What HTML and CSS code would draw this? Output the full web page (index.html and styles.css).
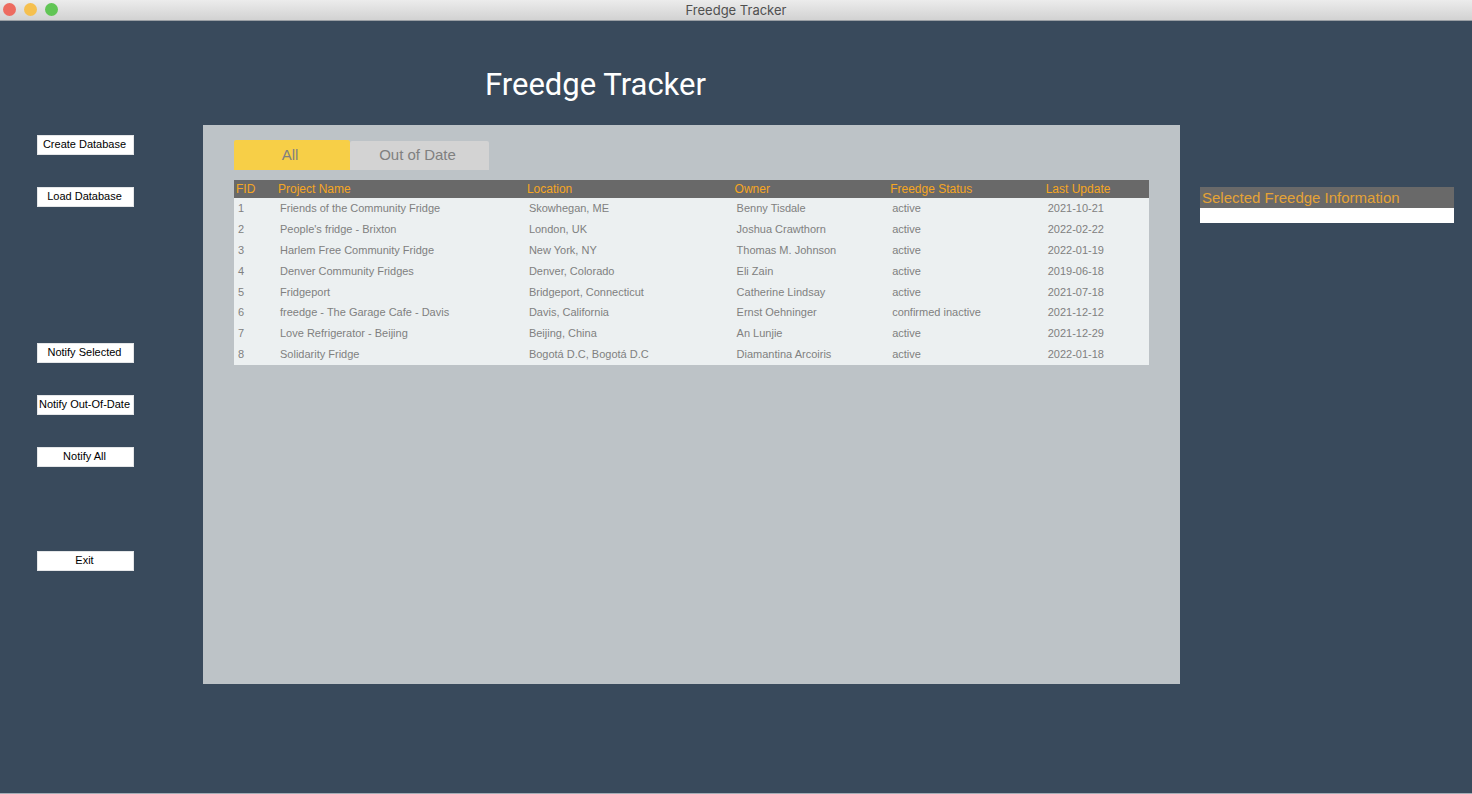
FILE: index.html
```html
<!DOCTYPE html>
<html lang="en">
<head>
<meta charset="utf-8">
<title>Freedge Tracker</title>
<link rel="stylesheet" href="styles.css">
</head>
<body>
<div class="window">
  <header class="titlebar">
    <div class="lights">
      <button class="light light-close" type="button" aria-label="Close"></button>
      <button class="light light-minimize" type="button" aria-label="Minimize"></button>
      <button class="light light-zoom" type="button" aria-label="Zoom"></button>
    </div>
    <span class="window-title">Freedge Tracker</span>
  </header>
  <div class="layout">
    <nav class="sidebar">
      <div class="group">
        <button class="action" type="button">Create Database</button>
        <button class="action" type="button">Load Database</button>
      </div>
      <div class="group group-notify">
        <button class="action" type="button">Notify Selected</button>
        <button class="action" type="button">Notify Out-Of-Date</button>
        <button class="action" type="button">Notify All</button>
      </div>
      <button class="action" type="button">Exit</button>
    </nav>
    <main class="main">
      <h1 class="heading">Freedge Tracker</h1>
      <section class="panel">
        <div class="tabs" role="tablist">
          <button class="tab tab-active" type="button" role="tab" aria-selected="true">All</button>
          <button class="tab" type="button" role="tab" aria-selected="false">Out of Date</button>
        </div>
        <table class="records">
          <colgroup>
            <col class="col-id"><col class="col-name"><col class="col-location"><col class="col-owner"><col class="col-status"><col class="col-update">
          </colgroup>
          <thead>
            <tr><th>FID</th><th>Project Name</th><th>Location</th><th>Owner</th><th>Freedge Status</th><th>Last Update</th></tr>
          </thead>
          <tbody>
            <tr><td>1</td><td>Friends of the Community Fridge</td><td>Skowhegan, ME</td><td>Benny Tisdale</td><td>active</td><td>2021-10-21</td></tr>
            <tr><td>2</td><td>People's fridge - Brixton</td><td>London, UK</td><td>Joshua Crawthorn</td><td>active</td><td>2022-02-22</td></tr>
            <tr><td>3</td><td>Harlem Free Community Fridge</td><td>New York, NY</td><td>Thomas M. Johnson</td><td>active</td><td>2022-01-19</td></tr>
            <tr><td>4</td><td>Denver Community Fridges</td><td>Denver, Colorado</td><td>Eli Zain</td><td>active</td><td>2019-06-18</td></tr>
            <tr><td>5</td><td>Fridgeport</td><td>Bridgeport, Connecticut</td><td>Catherine Lindsay</td><td>active</td><td>2021-07-18</td></tr>
            <tr><td>6</td><td>freedge - The Garage Cafe - Davis</td><td>Davis, California</td><td>Ernst Oehninger</td><td>confirmed inactive</td><td>2021-12-12</td></tr>
            <tr><td>7</td><td>Love Refrigerator - Beijing</td><td>Beijing, China</td><td>An Lunjie</td><td>active</td><td>2021-12-29</td></tr>
            <tr><td>8</td><td>Solidarity Fridge</td><td>Bogotá D.C, Bogotá D.C</td><td>Diamantina Arcoiris</td><td>active</td><td>2022-01-18</td></tr>
          </tbody>
        </table>
      </section>
    </main>
    <aside class="details">
      <h2 class="details-title">Selected Freedge Information</h2>
      <div class="details-body"></div>
    </aside>
  </div>
</div>
</body>
</html>
```

FILE: styles.css
```css
* {
  box-sizing: border-box;
}

body {
  margin: 0;
  font-family: "Liberation Sans", Arial, sans-serif;
}

button {
  font-family: inherit;
  border: 0;
  padding: 0;
}

.window {
  display: flex;
  flex-direction: column;
  min-height: 100vh;
  background: #394a5c;
  border-bottom: 1px solid #a4adb6;
}

.titlebar {
  display: grid;
  grid-template-columns: 1fr auto 1fr;
  align-items: center;
  height: 21px;
  background: linear-gradient(#ececec, #d2d2d2);
  border-bottom: 1px solid #9a9fa4;
}

.lights {
  display: flex;
  gap: 8px;
  padding: 0 0 2px 3px;
}

.light {
  width: 13px;
  height: 13px;
  border-radius: 50%;
}

.light-close {
  background: #ed6b60;
}

.light-minimize {
  background: #f5c04f;
}

.light-zoom {
  background: #61c555;
}

.window-title {
  font-family: Inter, sans-serif;
  font-size: 13px;
  line-height: 20px;
  color: #505050;
}

.layout {
  flex: 1;
  display: grid;
  grid-template-columns: 203px 1fr 292px;
}

.sidebar {
  display: flex;
  flex-direction: column;
  align-items: flex-start;
  padding: 114px 0 0 37px;
}

.group {
  display: flex;
  flex-direction: column;
  gap: 32px;
  margin-bottom: 136px;
}

.group-notify {
  margin-bottom: 84px;
}

.action {
  width: 97px;
  height: 20px;
  padding: 0 2px 2px 0;
  background: #fff;
  border: 1px solid #e4e6e8;
  font-size: 11px;
  line-height: 16px;
  white-space: nowrap;
  color: #000;
}

.main {
  display: flex;
  flex-direction: column;
  padding-bottom: 109px;
}

.heading {
  margin: 0;
  padding: 44px 192px 20px 0;
  font-family: Roboto, sans-serif;
  font-size: 31px;
  font-weight: 400;
  line-height: 40px;
  text-align: center;
  color: #fff;
}

.panel {
  flex: 1;
  padding: 15px 31px;
  background: #bdc3c7;
}

.tabs {
  display: flex;
  align-items: flex-end;
  margin-bottom: 10px;
}

.tab {
  width: 139px;
  height: 29px;
  padding: 0 4px 2px 0;
  border-radius: 2px 2px 0 0;
  background: #d3d3d3;
  font-size: 15px;
  color: #808080;
}

.tab-active {
  width: 116px;
  height: 30px;
  background: #f7cf47;
}

.records {
  width: 100%;
  height: 185px;
  table-layout: fixed;
  border-collapse: collapse;
  background: #ecf0f1;
  text-align: left;
  white-space: nowrap;
}

.col-id {
  width: 42px;
}

.col-name {
  width: 27.2%;
}

.col-location {
  width: 22.7%;
}

.col-owner {
  width: 17%;
}

.col-status {
  width: 17%;
}

.records th {
  height: 18px;
  padding: 0 2px;
  background: #696969;
  font-size: 12px;
  font-weight: 400;
  line-height: 18px;
  color: #f5a623;
}

.records td {
  padding: 0 4px;
  font-size: 11px;
  line-height: 20px;
  vertical-align: top;
  color: #808080;
}

.details {
  padding: 166px 18px 0 20px;
}

.details-title {
  margin: 0;
  padding: 0 2px;
  background: #696969;
  font-size: 15px;
  font-weight: 400;
  line-height: 21px;
  color: #e5a336;
}

.details-body {
  min-height: 15px;
  background: #fff;
}
```
